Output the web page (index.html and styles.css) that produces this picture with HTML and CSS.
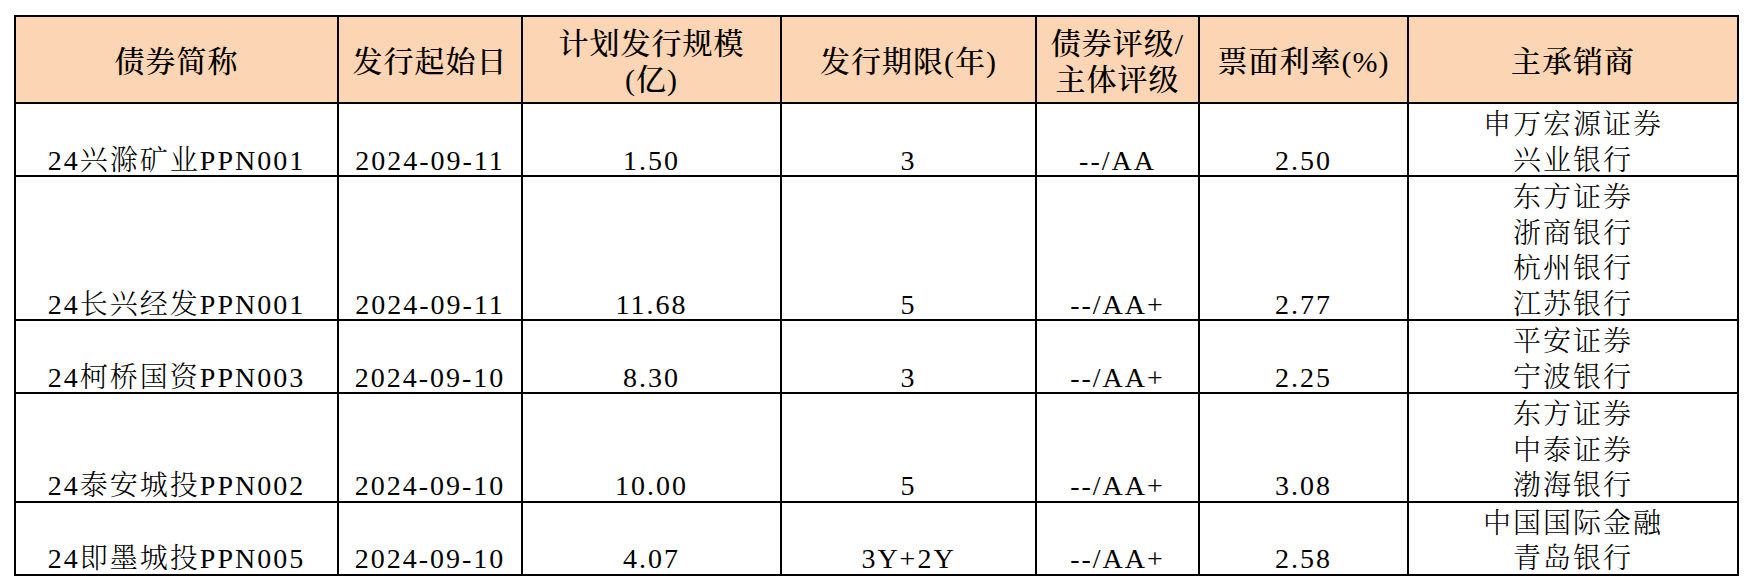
FILE: index.html
```html
<!DOCTYPE html>
<html lang="zh-CN">
<head>
<meta charset="utf-8">
<title>债券发行</title>
<link rel="stylesheet" href="styles.css">
</head>
<body>
<table class="bonds">
  <colgroup>
    <col class="c1"><col class="c2"><col class="c3"><col class="c4"><col class="c5"><col class="c6"><col class="c7">
  </colgroup>
  <thead>
    <tr class="head">
      <th>债券简称</th>
      <th>发行起始日</th>
      <th>计划发行规模<br>(亿)</th>
      <th>发行期限(年)</th>
      <th>债券评级/<br>主体评级</th>
      <th>票面利率(%)</th>
      <th>主承销商</th>
    </tr>
  </thead>
  <tbody>
    <tr>
      <td><div class="v">24兴滁矿业PPN001</div></td>
      <td><div class="v">2024-09-11</div></td>
      <td><div class="v">1.50</div></td>
      <td><div class="v">3</div></td>
      <td><div class="v">--/AA</div></td>
      <td><div class="v">2.50</div></td>
      <td><div class="v">申万宏源证券<br>兴业银行</div></td>
    </tr>
    <tr>
      <td><div class="v">24长兴经发PPN001</div></td>
      <td><div class="v">2024-09-11</div></td>
      <td><div class="v">11.68</div></td>
      <td><div class="v">5</div></td>
      <td><div class="v">--/AA+</div></td>
      <td><div class="v">2.77</div></td>
      <td><div class="v">东方证券<br>浙商银行<br>杭州银行<br>江苏银行</div></td>
    </tr>
    <tr>
      <td><div class="v">24柯桥国资PPN003</div></td>
      <td><div class="v">2024-09-10</div></td>
      <td><div class="v">8.30</div></td>
      <td><div class="v">3</div></td>
      <td><div class="v">--/AA+</div></td>
      <td><div class="v">2.25</div></td>
      <td><div class="v">平安证券<br>宁波银行</div></td>
    </tr>
    <tr>
      <td><div class="v">24泰安城投PPN002</div></td>
      <td><div class="v">2024-09-10</div></td>
      <td><div class="v">10.00</div></td>
      <td><div class="v">5</div></td>
      <td><div class="v">--/AA+</div></td>
      <td><div class="v">3.08</div></td>
      <td><div class="v">东方证券<br>中泰证券<br>渤海银行</div></td>
    </tr>
    <tr>
      <td><div class="v">24即墨城投PPN005</div></td>
      <td><div class="v">2024-09-10</div></td>
      <td><div class="v">4.07</div></td>
      <td><div class="v">3Y+2Y</div></td>
      <td><div class="v">--/AA+</div></td>
      <td><div class="v">2.58</div></td>
      <td><div class="v">中国国际金融<br>青岛银行</div></td>
    </tr>
  </tbody>
</table>
</body>
</html>
```

FILE: styles.css
```css
html, body {
  margin: 0;
  padding: 0;
  background: #ffffff;
}

body {
  padding: 15px 0 0 14px;
  font-family: "Liberation Serif", "Noto Serif CJK SC", "Noto Sans CJK SC", serif;
  color: #000000;
}

.bonds {
  border-collapse: collapse;
  table-layout: fixed;
  width: 1725px;
  border: 2px solid #000000;
}

.bonds .c1 { width: 323px; }
.bonds .c2 { width: 184px; }
.bonds .c3 { width: 259px; }
.bonds .c4 { width: 255px; }
.bonds .c5 { width: 163px; }
.bonds .c6 { width: 209px; }
.bonds .c7 { width: 330px; }

.bonds th,
.bonds td {
  border: 2px solid #000000;
  padding: 0;
  text-align: center;
  white-space: nowrap;
}

.bonds th {
  background: #fcd5b4;
  font-size: 30px;
  font-weight: 500;
  letter-spacing: 1px;
  line-height: 36px;
  vertical-align: middle;
  padding-top: 4px;
}

.bonds .head {
  height: 87px;
}

.bonds td {
  font-size: 28px;
  font-weight: 300;
  letter-spacing: 2px;
  line-height: 35.5px;
  vertical-align: bottom;
  padding-top: 3px;
}

.bonds .v {
  margin-bottom: -3px;
}
```
